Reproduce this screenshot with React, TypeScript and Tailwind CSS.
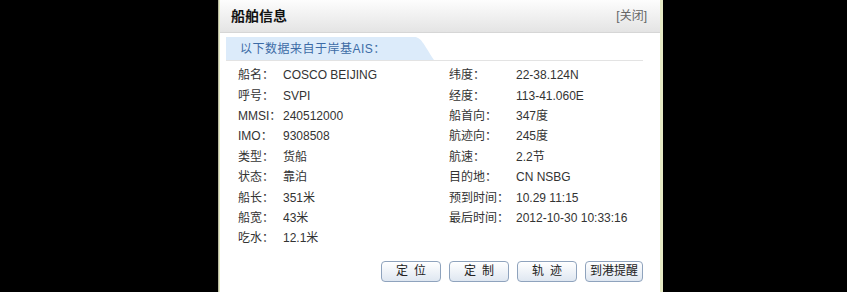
const left: [string, string][] = [
  ['船名：', 'COSCO BEIJING'],
  ['呼号：', 'SVPI'],
  ['MMSI：', '240512000'],
  ['IMO：', '9308508'],
  ['类型：', '货船'],
  ['状态：', '靠泊'],
  ['船长：', '351米'],
  ['船宽：', '43米'],
  ['吃水：', '12.1米'],
]

const right: [string, string][] = [
  ['纬度：', '22-38.124N'],
  ['经度：', '113-41.060E'],
  ['船首向：', '347度'],
  ['航迹向：', '245度'],
  ['航速：', '2.2节'],
  ['目的地：', 'CN NSBG'],
  ['预到时间：', '10.29 11:15'],
  ['最后时间：', '2012-10-30 10:33:16'],
]

function Btn({ label, wide }: { label: string; wide?: boolean }) {
  return (
    <button
      className={`h-[21px] rounded-[4px] border border-[#8fa3bd] bg-gradient-to-b from-white to-[#dfe7f1] text-[12px] text-[#222] shadow-[inset_0_1px_0_#fff] ${
        wide ? 'w-[58px] tracking-normal' : 'w-[60px] tracking-[6px] pl-[6px]'
      }`}
    >
      {label}
    </button>
  )
}

export default function App() {
  return (
    <div
      className="flex h-[292px] w-[847px] bg-black pl-[218px]"
      style={{ fontFamily: '"Liberation Sans", "Noto Sans CJK SC", sans-serif' }}
    >
      <div className="flex h-full w-[445px] border-l border-[#b9b9a2] bg-[#e6eac4] pl-[1px] pr-[3px]">
        <div className="flex flex-1 flex-col bg-white">
          <div className="flex h-[33px] items-center justify-between border-b border-[#d6d6d6] bg-gradient-to-b from-[#fdfdfd] to-[#e4e4e4] pl-[11px] pr-[13px]">
            <span className="text-[14px] font-bold text-[#111]">船舶信息</span>
            <span className="text-[12px] text-[#666]">[关闭]</span>
          </div>

          <div className="flex flex-col pl-[6px] pr-[17px] pt-[4px]">
            <div className="flex border-b border-[#e3e3e3]">
              <div className="flex h-[23px] items-center bg-[#dcebfa] pl-[14px] pr-[24px] text-[12px] tracking-[0.5px] text-[#3d6ba6]">
                以下数据来自于岸基AIS：
              </div>
              <svg width="24" height="23" viewBox="0 0 24 23" className="block">
                <path d="M0 0 H4 C11 0 13 6 24 23 H0 Z" fill="#dcebfa" />
              </svg>
            </div>

            <div className="flex pt-[4px] text-[12px] text-[#333]">
              <div className="flex w-[223px] flex-col pl-[12px]">
                {left.map(([k, v]) => (
                  <div key={k} className="flex h-[20.4px] items-center">
                    <span className="w-[45px] shrink-0">{k}</span>
                    <span>{v}</span>
                  </div>
                ))}
              </div>
              <div className="flex flex-col">
                {right.map(([k, v]) => (
                  <div key={k} className="flex h-[20.4px] items-center">
                    <span className="w-[67px] shrink-0">{k}</span>
                    <span>{v}</span>
                  </div>
                ))}
              </div>
            </div>

            <div className="flex justify-end gap-[8px] pt-[12px]">
              <Btn label="定位" />
              <Btn label="定制" />
              <Btn label="轨迹" />
              <Btn label="到港提醒" wide />
            </div>
          </div>
        </div>
      </div>
    </div>
  )
}
